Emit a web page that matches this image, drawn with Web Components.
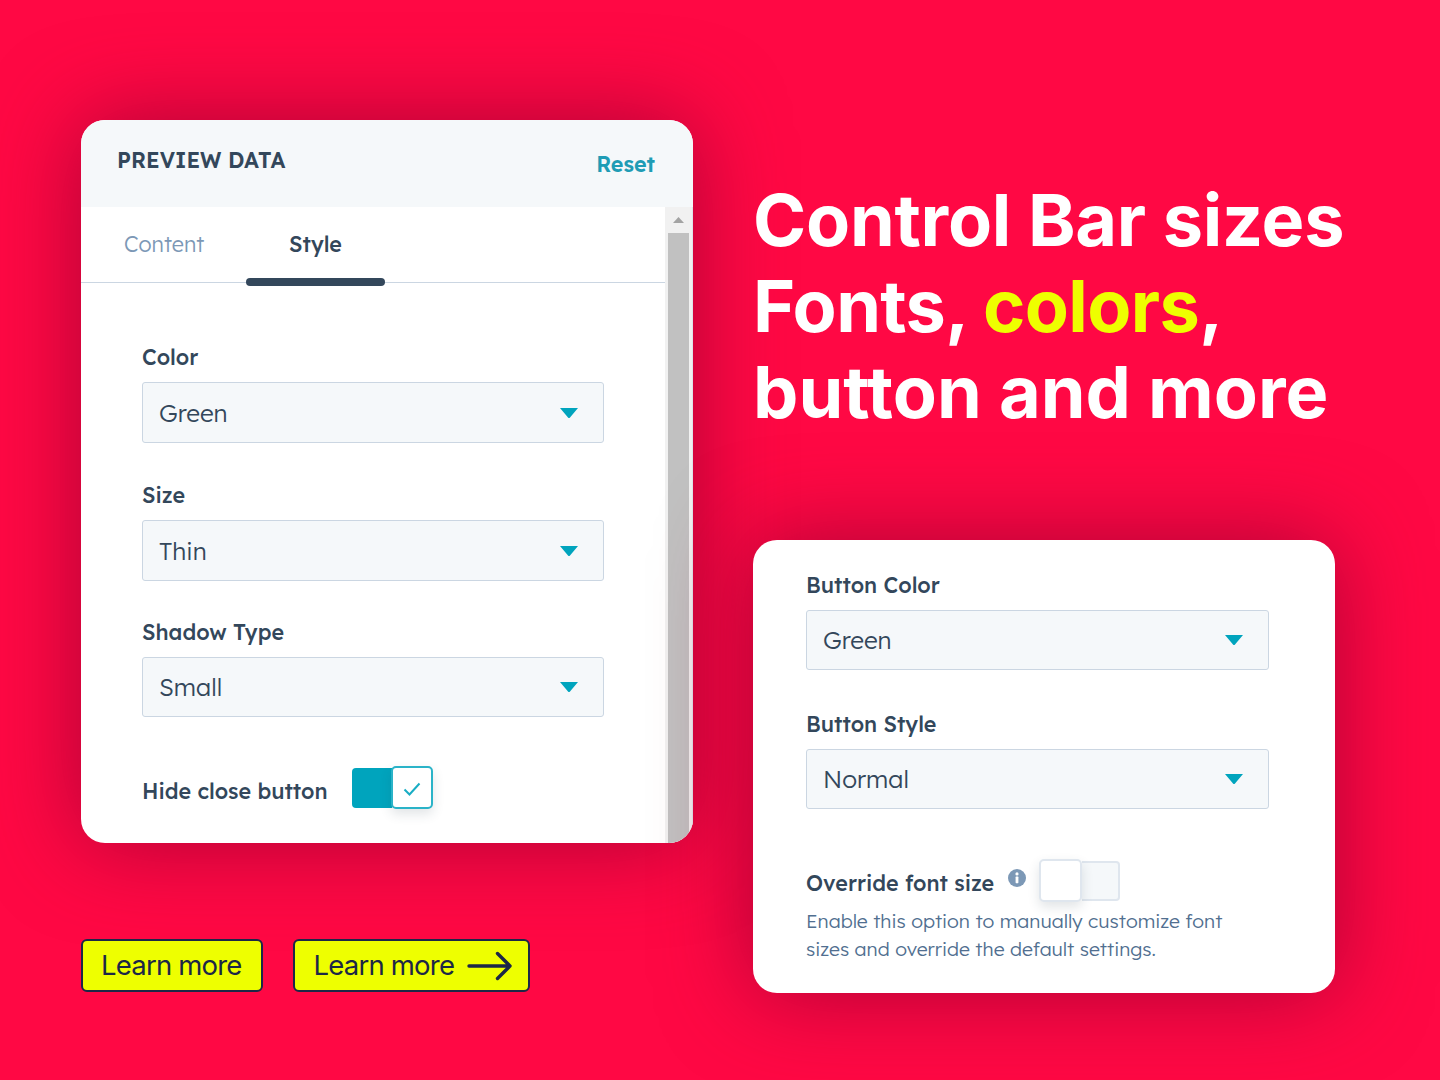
<!DOCTYPE html>
<html lang="en"><head><meta charset="utf-8"><title>Control Bar</title>
<style>
html,body{margin:0;padding:0;height:100%}
body{width:1440px;height:1080px;overflow:hidden;background:#ff0844;font-family:Inter,"Liberation Sans",sans-serif}
</style></head><body>
<promo-page>
  <div slot="left">
    <panel-card>
      <settings-header slot="header" title-text="PREVIEW DATA" action="Reset"></settings-header>
      <tab-bar><tab-item>Content</tab-item><tab-item active>Style</tab-item></tab-bar>
      <div style="padding:61px 61px 0 61px">
        <select-field label="Color" value="Green"></select-field>
        <select-field label="Size" value="Thin" style="margin-top:39px"></select-field>
        <select-field label="Shadow Type" value="Small" style="margin-top:38px;--h:60px"></select-field>
        <toggle-row label="Hide close button" on style="margin-top:49px"></toggle-row>
      </div>
    </panel-card>
    <div style="display:flex;gap:30px;margin-top:96px">
      <cta-button>Learn more</cta-button>
      <cta-button arrow>Learn more</cta-button>
    </div>
  </div>
  <div slot="right">
    <hero-title><span>Control Bar sizes</span><span style="letter-spacing:-.6px">Fonts, <em style="font-style:normal;color:#eeff00">colors</em>,</span><span style="letter-spacing:.02px">button and more</span></hero-title>
    <button-card></button-card>
  </div>
</promo-page>
<script>
const FONT='Lexend,"Lexend Deca",Inter,"Noto Sans",sans-serif';
function def(name,html,init){
  customElements.define(name,class extends HTMLElement{
    connectedCallback(){ if(this.shadowRoot) return;
      const s=this.attachShadow({mode:'open'});
      s.innerHTML=typeof html==='function'?html(this):html; if(init) init(this,s);}
  });
}
def('promo-page',`<style>
:host{display:flex;width:1440px;height:1080px;box-sizing:border-box;padding:120px 0 0 81px;gap:60px}
.l{width:612px}.r{flex:1;padding-top:57px}
</style><div class="l"><slot name="left"></slot></div><div class="r"><slot name="right"></slot></div>`);
def('panel-card',`<style>
:host{display:block;width:612px;height:723px;background:#fff;border-radius:24px;overflow:hidden;box-shadow:0 0 90px rgba(150,0,50,.78);font-family:${FONT}}
.body{display:flex;height:636px}
.main{flex:1;min-width:0;overflow:hidden}
.sb{width:28px;flex:none;background:#f1f1f1;box-sizing:border-box;border-right:1px solid #dfe5ea;display:flex;flex-direction:column;align-items:center}
.up{height:26px;flex:none;display:flex;align-items:center;justify-content:center;margin-right:1px}
.thumb{flex:1;width:21px;background:#c1c1c1;margin-right:1px}
</style><slot name="header"></slot><div class="body"><div class="main"><slot></slot></div>
<div class="sb"><div class="up"><svg width="11" height="6" viewBox="0 0 11 6"><path d="M5.5 0L11 6H0z" fill="#a3a3a3"/></svg></div><div class="thumb"></div></div></div>`);
def('settings-header',h=>`<style>
:host{display:flex;justify-content:space-between;height:87px;box-sizing:border-box;background:#f5f8fa;padding:0 38px 0 36px}
.t{font-size:21.5px;font-weight:600;color:#33475b;margin-top:27px;line-height:26px}
.a{font-size:21.5px;font-weight:600;color:#1f9cb5;margin-top:30px;line-height:27px}
</style><div class="t">${h.getAttribute('title-text')}</div><div class="a">${h.getAttribute('action')}</div>`);
def('tab-bar',`<style>
:host{display:flex;height:76px;box-sizing:border-box;border-bottom:1px solid #cbd6e2;padding-left:43px}
</style><slot></slot>`);
def('tab-item',h=>`<style>
:host{display:block;position:relative;height:75px;box-sizing:border-box;font-size:21.5px;line-height:26px;padding-top:24px;color:#7c98b6;font-weight:300}
:host(:first-child){width:122px;padding-left:0}
:host([active]){width:139px;text-align:center;color:#33475b;font-weight:500}
.bar{position:absolute;left:0;right:0;bottom:-4px;height:8px;border-radius:4px;background:#33475b}
</style><slot></slot>${h.hasAttribute('active')?'<div class="bar"></div>':''}`);
def('select-field',h=>`<style>
:host{display:block}
label{display:block;font-size:21.5px;font-weight:500;line-height:26px;color:#33475b;margin-bottom:12px}
.box{display:flex;align-items:center;justify-content:space-between;height:var(--h,61px);box-sizing:border-box;background:#f5f8fa;border:1px solid #cbd6e2;border-radius:3px;padding:0 25px 0 16px;font-size:24.4px;font-weight:300;color:#33475b}
svg{display:block}
</style><label>${h.getAttribute('label')}</label><div class="box"><span>${h.getAttribute('value')}</span>
<svg width="18" height="10" viewBox="0 0 18 10"><path d="M0 0H18L10 9.4a1.3 1.3 0 0 1-2 0z" fill="#00a4bd"/></svg></div>`);
def('toggle-switch',h=>{const on=h.hasAttribute('on');return `<style>
:host{display:flex;align-items:center;width:81px;height:43px;flex:none}
.t{height:40px;box-sizing:border-box;border-radius:4px;flex:none}
.k{width:${on?42:43}px;height:43px;box-sizing:border-box;background:#fff;border-radius:5px;flex:none;display:flex;align-items:center;justify-content:center;box-shadow:0 5px 12px rgba(45,62,80,.14);position:relative}
</style>${on?`<div class="t" style="width:40px;background:#00a4bd;border-radius:4px 0 0 4px"></div>
<div class="k" style="border:2px solid #2ab3c8;margin-left:-1px"><svg style="margin-top:3px" width="18" height="14" viewBox="0 0 18 14"><path d="M1.5 7.5L6.5 12.5L16.5 1.5" fill="none" stroke="#19adc4" stroke-width="2"/></svg></div>`
:`<div class="k" style="border:2px solid #dfe6ee"></div><div class="t" style="width:38px;background:#f5f8fa;border:2px solid #dfe6ee;border-left:0;border-radius:0 4px 4px 0"></div>`}`});
def('toggle-row',h=>`<style>
:host{display:flex;align-items:center;gap:24px;font-size:21.5px;font-weight:500;color:#33475b}
span{padding-top:5px}
</style><span>${h.getAttribute('label')}</span><toggle-switch ${h.hasAttribute('on')?'on':''}></toggle-switch>`);
def('cta-button',h=>`<style>
:host{display:flex;align-items:center;height:53px;box-sizing:border-box;background:#eeff00;border:2px solid #1c2747;border-radius:6px;padding:0 19px 0 18px;font:400 27.5px/1 Inter,sans-serif;letter-spacing:-.8px;color:#1c2747;gap:12px}
:host([arrow]){padding:0 15px 0 19px;gap:13px}
svg{display:block}
</style><slot></slot>${h.hasAttribute('arrow')?'<svg width="46" height="30" viewBox="0 0 46 30"><path d="M2 15H43M30.5 2.5L43 15L30.5 27.5" fill="none" stroke="#1c2747" stroke-width="3.4" stroke-linecap="round" stroke-linejoin="round"/></svg>':''}`);
def('hero-title',`<style>
:host{display:flex;flex-direction:column;font:700 72px/86px Inter,sans-serif;color:#fff;letter-spacing:-.25px}
::slotted(span){display:block;white-space:nowrap}
</style><slot></slot>`);
def('button-card',`<style>
:host{display:block;width:582px;height:453px;box-sizing:border-box;margin-top:105px;background:#fff;border-radius:24px;box-shadow:0 0 90px rgba(150,0,50,.78);padding:32px 66px 0 53px;font-family:${FONT};--h:60px}
.row{display:flex;align-items:center;margin-top:50px;font-size:21.5px;font-weight:500;color:#33475b}
.row span{padding-top:4px}
.i{margin:0 13px 0 14px;align-self:flex-start;margin-top:10px}
p{margin:5px 0 0;font-size:19.35px;line-height:28px;font-weight:300;color:#516f90}
.gap{margin-top:41px}
</style>
<select-field label="Button Color" value="Green"></select-field>
<select-field class="gap" label="Button Style" value="Normal"></select-field>
<div class="row"><span>Override font size</span>
<svg class="i" width="18" height="18" viewBox="0 0 18 18"><circle cx="9" cy="9" r="9" fill="#7c98b6"/><rect x="7.6" y="7.6" width="2.8" height="6.6" rx=".6" fill="#fff"/><circle cx="9" cy="4.9" r="1.6" fill="#fff"/></svg>
<toggle-switch></toggle-switch></div>
<p>Enable this option to manually customize font<br>sizes and override the default settings.</p>`);
</script>
</body></html>
